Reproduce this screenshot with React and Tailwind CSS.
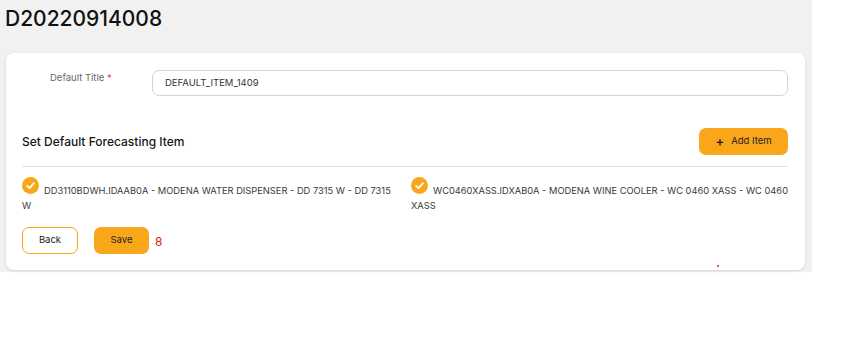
import React from "react";

function Check() {
  return (
    <span className="inline-flex items-center justify-center w-[17px] h-[17px] rounded-full bg-[#faa61a] align-[3px] mr-[5px]">
      <svg width="11" height="11" viewBox="0 0 12 12" fill="none">
        <path d="M2.2 6.3 L4.9 8.9 L9.8 3.4" stroke="white" strokeWidth="1.9" strokeLinecap="round" strokeLinejoin="round" />
      </svg>
    </span>
  );
}

export default function App() {
  return (
    <div className="w-[842px] h-[338px] bg-white font-['Inter','Liberation_Sans',sans-serif]">
      <div className="w-[812px] bg-[#f1f1f1] pl-[6px] pr-[7px] pb-[2px]">
        <div className="h-[53px] pt-[6px]">
          <h1 className="text-[21px] leading-[26px] font-medium text-[#111] -ml-px">D20220914008</h1>
        </div>
        <div className="relative bg-white rounded-[8px] shadow-[0_1px_3px_rgba(0,0,0,0.12)] pl-[16px] pr-[17px] pt-[17px] pb-[16px]">
          <div className="flex">
            <div className="w-[130px] pt-[2px] pl-[28px] text-[9.5px] leading-[12px] text-[#6b6470]">
              Default Title <span className="text-[#e5484d]">*</span>
            </div>
            <div className="flex-1 h-[26px] border border-[#cfd4dc] rounded-[7px] flex items-center px-[12px] text-[9.5px] text-[#333]">
              DEFAULT_ITEM_1409
            </div>
          </div>
          <div className="flex items-center justify-between mt-[32px]">
            <div className="text-[12px] font-medium text-[#161616]">Set Default Forecasting Item</div>
            <button className="w-[89px] h-[27px] rounded-[7px] bg-[#faa61a] flex items-center justify-center gap-[7px] text-[9.5px] text-[#222]">
              <span className="text-[13px] leading-none font-semibold">+</span>
              <span>Add Item</span>
            </button>
          </div>
          <div className="mt-[11px] border-t border-[#e1e1e1]" />
          <div className="grid grid-cols-2 gap-x-[12px] mt-[10px] text-[9.3px] leading-[15px] text-[#3a3a3a]">
            <div>
              <Check />DD3110BDWH.IDAAB0A - MODENA WATER DISPENSER - DD 7315 W - DD 7315 W
            </div>
            <div>
              <Check />WC0460XASS.IDXAB0A - MODENA WINE COOLER - WC 0460 XASS - WC 0460 XASS
            </div>
          </div>
          <div className="flex items-center mt-[14px]">
            <button className="w-[56px] h-[27px] rounded-[7px] border border-[#faa61a] bg-white text-[9.5px] text-[#222]">Back</button>
            <button className="ml-[16px] w-[55px] h-[27px] rounded-[7px] bg-[#faa61a] text-[9.5px] text-[#222]">Save</button>
            <span className="ml-[6px] mt-[3px] text-[12px] text-[#e02020]">8</span>
          </div>
          <span className="absolute left-[711px] bottom-[3px] w-[2px] h-[2px] rounded-full bg-[#e02020]" />
        </div>
      </div>
    </div>
  );
}
